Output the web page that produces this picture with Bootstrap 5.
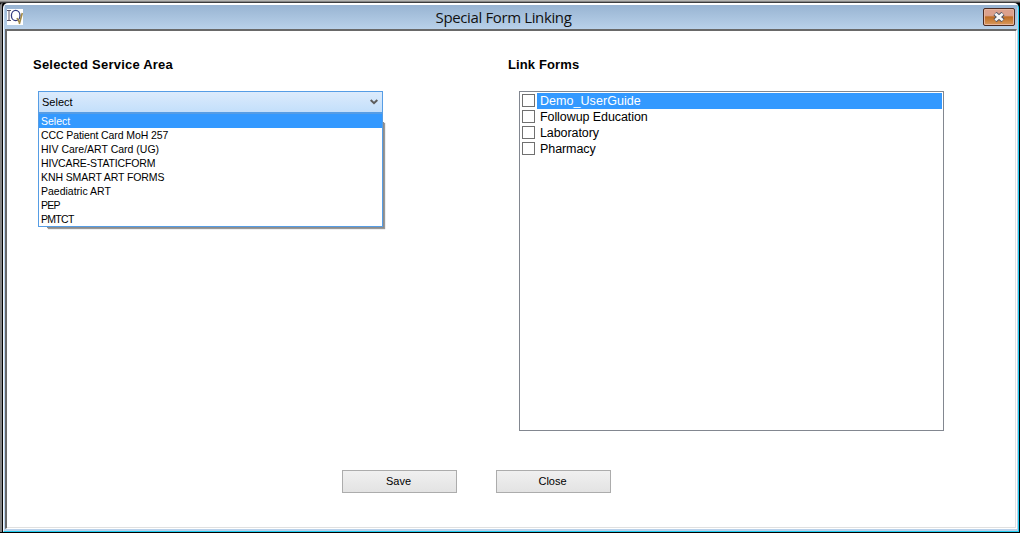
<!DOCTYPE html>
<html lang="en">
<head>
<meta charset="utf-8">
<title>Special Form Linking</title>
<link rel="stylesheet" href="https://cdn.jsdelivr.net/npm/bootstrap@5.3.0/dist/css/bootstrap.min.css">
<style>
html,body{height:100%;overflow:hidden}
body{font-family:"Liberation Sans",Arial,sans-serif;color:#000;background:#000;font-size:11px;line-height:14px}
.desk{height:533px;background:linear-gradient(#b4b4b0 0 1px,#858585 1px 2px,#3c3c3c 2px 3px,#000 3px);padding:3px 1px 1px 0}
.edge{height:529px;border-left:2px solid #858585;background:#000;padding:0 0 0 1px;border-top-left-radius:3px}
.win{height:529px;border-top:2px solid #fff;border-left:1px solid #f4f8fc;border-right:1px solid #22cdf0;border-bottom:1px solid #22cdf0;border-radius:5px 5px 0 0;background:#b9d1ea;padding:0 1px 1px}
.titlebar{height:24px;background:linear-gradient(#98b4d2,#b9d1ea);position:relative}
.win-title{font-family:"Open Sans","Noto Sans",sans-serif;font-size:15px;letter-spacing:-.37px;line-height:25px;color:#111;white-space:nowrap;margin-right:15px}
.logo{position:absolute;left:2px;top:4px}
.btn-x,.btn-x:hover{position:absolute;right:2px;top:3px;width:32px;height:18px;padding:0;border:1px solid #4b2b22;border-radius:2px;background:linear-gradient(#dca18d 0 40%,#bd6c24 50%,#d99a5e);box-shadow:inset 0 0 0 1px #e6b59d;line-height:0}
.client{height:500px;background:#fff;border:1px solid #fff;border-top:2px solid #696969;border-left:2px solid #696969;box-shadow:inset -1px -1px #e0e0e0;padding:0 0 0 26px}
.colA{width:475px;padding-top:26px}
.colB{width:436px;padding-top:26px}
.head{font-size:13px;line-height:16px;font-weight:700;margin:0;white-space:nowrap;letter-spacing:.22px}
.colB .head{letter-spacing:.12px}
.combo{width:345px;height:22px;margin:18px 0 0 5px;border:1px solid #569de5;background:linear-gradient(#dcebfc,#c3dffb);padding:0 4px 0 3px}
.drop{width:345px;margin-left:5px;height:114px;border:1px solid #569de5;position:relative}
.shade{position:absolute;left:8px;right:-2px;top:8px;bottom:-2px;background:#8c8c8c;box-shadow:1px 1px 1px #999}
.drop .frame{position:relative;background:#fff;height:114px;width:345px;margin:-1px;border:1px solid #569de5}
.drop li{height:14px;line-height:14px;padding-left:2px;white-space:nowrap;font-size:10.5px}
.drop li.on{background:#39f;color:#fff}
.sp1{letter-spacing:-.1px}.sp3{letter-spacing:-.14px}.sp4{letter-spacing:-.1px}.sp6{letter-spacing:-.7px}
.checks{width:425px;height:340px;margin:18px 0 0 11px;border:1px solid #828790;padding:1px;font-size:12.5px;letter-spacing:-.08px}
.checks li{height:16px;line-height:16px;white-space:nowrap}
.box{width:13px;height:13px;border:1px solid #707070;background:#fff;margin:1px 1px 0}
.lab{flex:1;padding-left:3px;margin-left:1px}
.on .lab{background:#39f;color:#fff;letter-spacing:.05px}
.actions{margin:39px 0 0 309px;gap:39px}
.btn-w{width:115px;height:23px;padding:0 2px 1px 0;border:1px solid #acacac;border-radius:0;background:linear-gradient(#f0f0f0,#e3e3e3);font-size:11px;line-height:19px;color:#000}
</style>
</head>
<body>
<div class="desk"><div class="edge"><div class="win">
<header class="titlebar d-flex justify-content-center">
<svg class="logo" width="16" height="16"><path fill="#fff" d="M0 0h16v16H0z"/><path fill="none" stroke="#5a5468" d="M0 1.5h4M2 1v11M0 11.5h4"/><ellipse cx="8.7" cy="6.5" rx="4.3" ry="5.2" fill="none" stroke="#343c80" stroke-width="1.3"/><path d="M15.3 4 12.3 15M10 9l2.6 5" fill="none" stroke="#a08a48" stroke-width="1.6"/></svg>
<div class="win-title">Special Form Linking</div>
<button class="btn btn-x" aria-label="Close window"><svg width="14" height="10" viewBox="0 0 14 10"><path d="M3 1.5l8 7M11 1.5l-8 7" stroke="#4d5363" stroke-width="4.6"/><path d="M3.3 1.8l7.4 6.4M10.7 1.8l-7.4 6.4" stroke="#f6f6f6" stroke-width="2.8"/></svg></button>
</header>
<main class="client">
<div class="d-flex">
<section class="colA"><h1 class="head">Selected Service Area</h1>
<div class="combo d-flex align-items-center justify-content-between"><span>Select</span><svg width="8" height="6"><path d="M.7 1l3.3 3.2L7.3 1" fill="none" stroke="#5c5c5c" stroke-width="2"/></svg></div>
<div class="drop"><div class="shade"></div><ul class="frame list-unstyled"><li class="on">Select</li><li class="sp1">CCC Patient Card MoH 257</li><li>HIV Care/ART Card (UG)</li><li class="sp3">HIVCARE-STATICFORM</li><li class="sp4">KNH SMART ART FORMS</li><li>Paediatric ART</li><li class="sp6">PEP</li><li class="sp6">PMTCT</li></ul></div>
</section>
<section class="colB"><h2 class="head">Link Forms</h2>
<ul class="checks list-unstyled mb-0"><li class="d-flex on"><i class="box"></i><span class="lab">Demo_UserGuide</span></li><li class="d-flex"><i class="box"></i><span class="lab">Followup Education</span></li><li class="d-flex"><i class="box"></i><span class="lab">Laboratory</span></li><li class="d-flex"><i class="box"></i><span class="lab">Pharmacy</span></li></ul>
</section>
</div>
<div class="actions d-flex"><button class="btn btn-w">Save</button><button class="btn btn-w">Close</button></div>
</main>
</div></div></div>
<script src="https://cdn.jsdelivr.net/npm/bootstrap@5.3.0/dist/js/bootstrap.bundle.min.js"></script>
</body>
</html>
